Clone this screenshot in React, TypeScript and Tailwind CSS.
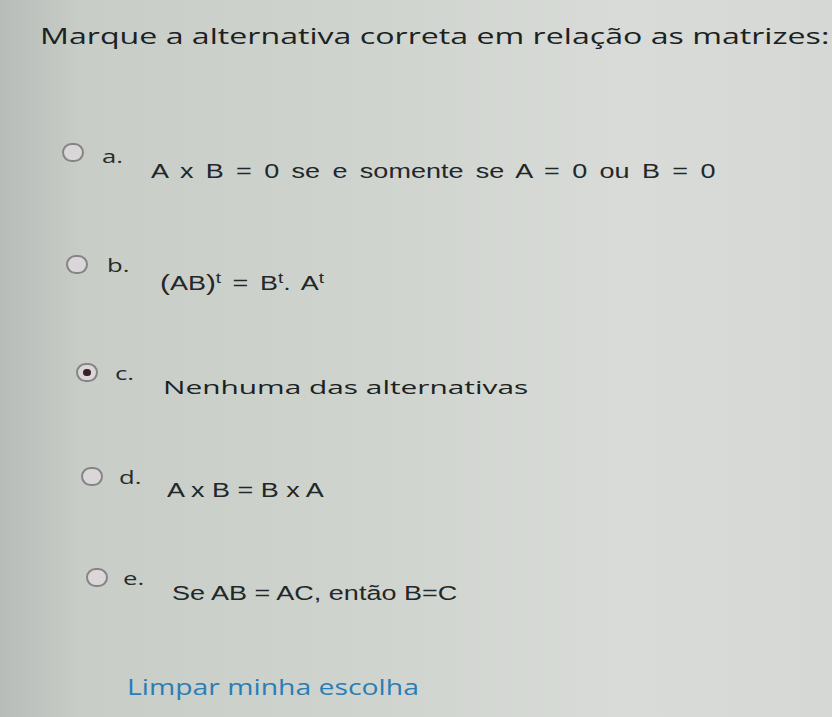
import React from "react";

const geo = { fontFamily: '"Open Sans", "DejaVu Sans", sans-serif' };
const arial = { fontFamily: '"Liberation Sans", Arial, sans-serif' };

function Radio({ checked }: { checked?: boolean }) {
  return (
    <div className="w-[22px] h-[19px] shrink-0 rounded-full border-2 border-[#858585] bg-[#dbd6d8] flex items-center justify-center">
      {checked && <div className="w-[8px] h-[7px] rounded-full bg-[#3a2129]" />}
    </div>
  );
}

function Stretch({ children, cls }: { children: React.ReactNode; cls: string }) {
  return <span className={"inline-block whitespace-nowrap origin-left " + cls}>{children}</span>;
}

type Row = {
  letter: string;
  checked?: boolean;
  rowCls: string;
  labelCls: string;
  contentCls: string;
  content: React.ReactNode;
};

const rows: Row[] = [
  {
    letter: "a.",
    rowCls: "ml-[62px] h-[112px]",
    labelCls: "pl-[18px] w-[67px] mt-[3px]",
    contentCls: "mt-[17px]",
    content: (
      <span style={arial} className="text-[20px] leading-[20px] text-[#22272a]">
        <Stretch cls="scale-x-[1.35] [word-spacing:3.6px]">A x B = 0 se e somente se A = 0 ou B = 0</Stretch>
      </span>
    ),
  },
  {
    letter: "b.",
    rowCls: "ml-[66px] h-[108px]",
    labelCls: "pl-[19px] w-[72px]",
    contentCls: "mt-[17px]",
    content: (
      <span style={arial} className="text-[20px] leading-[20px] text-[#22272a]">
        <Stretch cls="scale-x-[1.35] [word-spacing:3px]">
          <span className="text-[22px]">(</span>AB<span className="text-[22px]">)</span>
          <sup className="text-[14px]">t</sup> = B<sup className="text-[14px]">t</sup>. A
          <sup className="text-[14px]">t</sup>
        </Stretch>
      </span>
    ),
  },
  {
    letter: "c.",
    checked: true,
    rowCls: "ml-[76px] h-[104px]",
    labelCls: "pl-[17px] w-[65px]",
    contentCls: "mt-[13px]",
    content: (
      <span style={geo} className="text-[19px] leading-[20px] font-medium text-[#1a2222]">
        <Stretch cls="scale-x-[1.57]">Nenhuma das alternativas</Stretch>
      </span>
    ),
  },
  {
    letter: "d.",
    rowCls: "ml-[81px] h-[101px]",
    labelCls: "pl-[16px] w-[64px]",
    contentCls: "mt-[12px]",
    content: (
      <span style={arial} className="text-[20px] leading-[20px] text-[#22272a]">
        <Stretch cls="scale-x-[1.35]">A x B = B x A</Stretch>
      </span>
    ),
  },
  {
    letter: "e.",
    rowCls: "ml-[86px] h-[107px]",
    labelCls: "pl-[15px] w-[64px]",
    contentCls: "mt-[14px]",
    content: (
      <span style={arial} className="text-[20px] leading-[20px] text-[#22272a]">
        <Stretch cls="scale-x-[1.35]">Se AB = AC, então B=C</Stretch>
      </span>
    ),
  },
];

export default function App() {
  return (
    <div className="w-[832px] h-[717px] overflow-hidden bg-[linear-gradient(90deg,#b7bcb8_0%,#c8cdc8_10%,#d0d4cf_45%,#d8dbd7_75%,#d5d8d4_100%)]">
      <div className="pt-[24px] pl-[40px]" style={geo}>
        <div className="text-[21px] leading-[24px] font-medium text-[#1a2222]">
          <Stretch cls="scale-x-[1.53]">Marque a alternativa correta em relação as matrizes:</Stretch>
        </div>
      </div>
      <div className="mt-[95px] flex flex-col">
        {rows.map((r) => (
          <div key={r.letter} className={"flex items-start " + r.rowCls}>
            <Radio checked={r.checked} />
            <div className={"shrink-0 text-[19px] leading-[20px] font-medium text-[#262b2b] " + r.labelCls} style={geo}>
              <Stretch cls="scale-x-[1.35]">{r.letter}</Stretch>
            </div>
            <div className={r.contentCls}>{r.content}</div>
          </div>
        ))}
      </div>
      <div className="pl-[127px]" style={geo}>
        <div className="text-[21px] leading-[24px] font-medium text-[#2a7db5]">
          <Stretch cls="scale-x-[1.35]">Limpar minha escolha</Stretch>
        </div>
      </div>
    </div>
  );
}
